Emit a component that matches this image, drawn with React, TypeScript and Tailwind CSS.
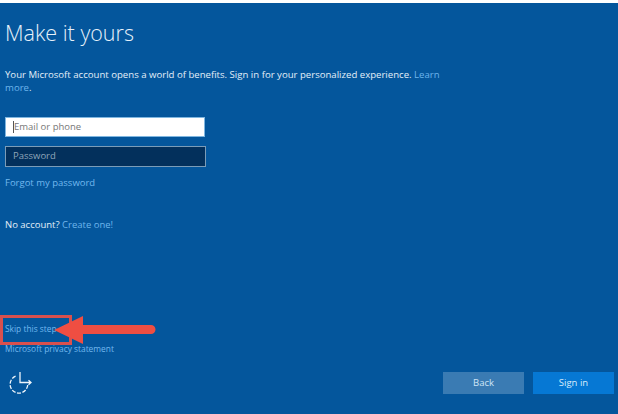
export default function App() {
  const font = { fontFamily: '"Open Sans", "Noto Sans", sans-serif' };
  return (
    <div className="relative w-[618px] h-[414px] overflow-hidden bg-white" style={font}>
      <div className="mt-[3px] h-[411px] bg-[#04569c] flex flex-col pl-[5px] pr-1 text-[9.5px]">
        <h1 className="mt-[14px] h-[32px] text-[21.5px] leading-[32px] font-light text-[#e6f1fa]">Make it yours</h1>
        <div className="mt-[19px] w-[440px] text-[9.6px] leading-[13px] text-[#e3eff9]">
          <div>
            Your Microsoft account opens a world of benefits. Sign in for your personalized experience. <span className="text-[#6db5ec]">Learn</span>
          </div>
          <div>
            <span className="text-[#6db5ec]">more</span>.
          </div>
        </div>
        <div className="mt-[23px] w-[200px] h-[20px] bg-white border border-[#7fb6e0] pl-[7px] flex items-center text-[9.5px] text-[#777777]">
          <span className="w-px h-[12px] bg-[#555555]"></span>Email or phone
        </div>
        <div className="mt-[9px] w-[201px] h-[21px] bg-[#03305c] border border-[#7b9cb8] pl-[7px] flex items-center text-[9.5px] text-[#8fa5b9]">Password</div>
        <a className="mt-[9px] h-[14px] leading-[14px] text-[#72b8ee]">Forgot my password</a>
        <div className="mt-[28px] h-[14px] leading-[14px] text-[#e3eff9]">No account? <span className="text-[#6db5ec]">Create one!</span></div>
        <a className="mt-[90px] h-[14px] leading-[14px] text-[8.4px] text-[#72b8ee]">Skip this step</a>
        <a className="mt-[6px] h-[14px] leading-[14px] text-[8.4px] text-[#72b8ee]">Microsoft privacy statement</a>
        <div className="mt-[14px] flex items-start justify-between">
          <svg width="24" height="24" viewBox="0 0 24 24" fill="none" stroke="#eef5fb" strokeWidth="1.3" className="ml-[3px]">
            <path d="M19.700 15A8.800 8.800 0 1 1 8 6" strokeDasharray="4 1.500" />
            <path d="M12 2V12.500H23M20.500 10.300l2.500 2.200-2.500 2.200" />
          </svg>
          <div className="flex gap-[9px] mt-[2px]">
            <button className="w-[81px] h-[22px] bg-[#3a7bb3] text-[9.5px] text-[#cfe6f8]">Back</button>
            <button className="w-[81px] h-[22px] bg-[#0678d4] text-[9.5px] text-[#d8ecfb]">Sign in</button>
          </div>
        </div>
      </div>
      <div className="absolute left-0 top-[315px] w-[72px] h-[30px] border-[3px] border-[#d9504e]"></div>
      <svg className="absolute left-[50px] top-[312px]" width="110" height="36" viewBox="0 0 110 36">
        <path d="M4 18 33 4V13H101a4.500 4.500 0 0 1 0 9H33V32Z" fill="#ef4e42" />
      </svg>
    </div>
  );
}
